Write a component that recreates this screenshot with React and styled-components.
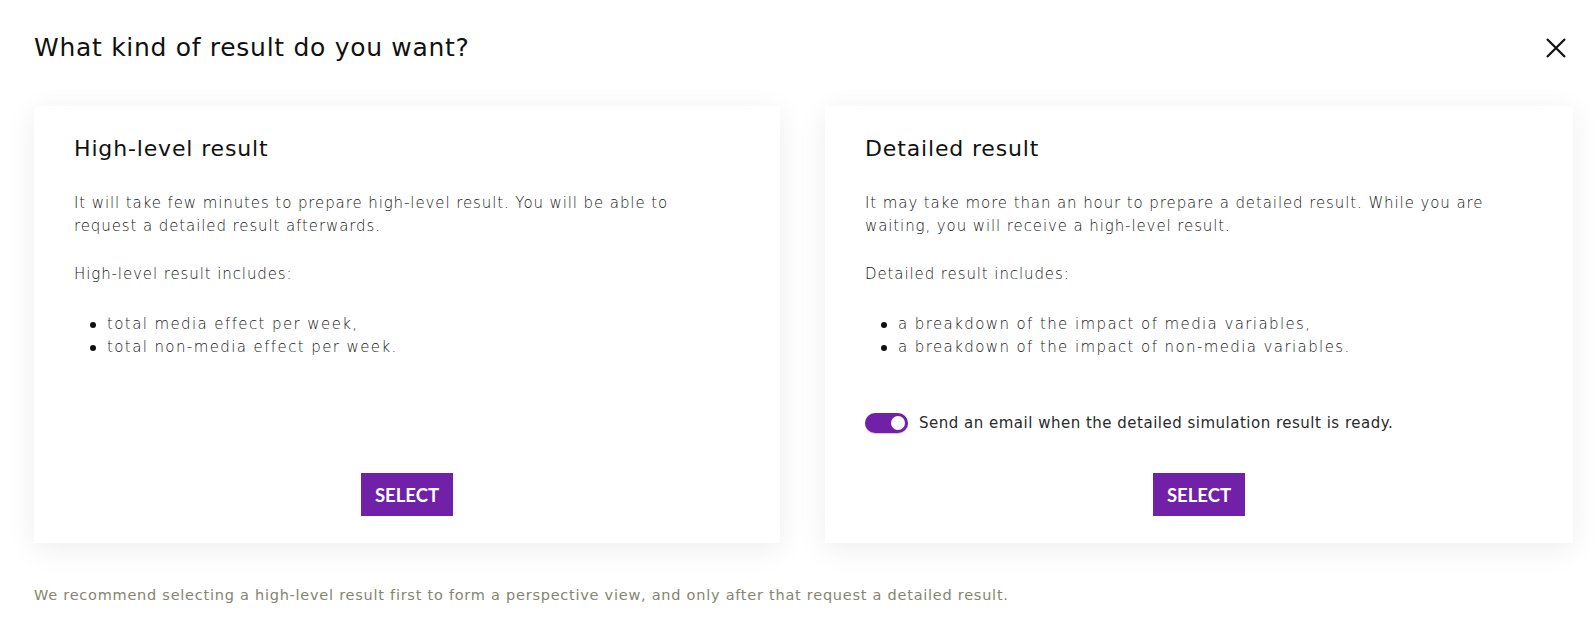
import React, { useState } from "react";
import styled, { createGlobalStyle } from "styled-components";

const GlobalStyle = createGlobalStyle`
  html, body {
    margin: 0;
    padding: 0;
    background: #fff;
    font-family: "DejaVu Sans", "Liberation Sans", sans-serif;
  }
`;

const purple = "#7021a7";

const Page = styled.div`
  width: 1595px;
  padding: 33px 29px 0 34px;
  box-sizing: border-box;
`;

const Header = styled.div`
  display: flex;
  justify-content: space-between;
  align-items: center;
  margin-bottom: 43px;
`;

const Title = styled.h1`
  margin: 0;
  font-size: 25px;
  line-height: 30px;
  font-weight: 400;
  color: #111;
  letter-spacing: 0.7px;
`;

const CloseButton = styled.button`
  display: flex;
  border: 0;
  background: none;
  padding: 0;
  cursor: pointer;
`;

const Cards = styled.div`
  display: grid;
  grid-template-columns: 746px 748px;
  gap: 45px;
`;

const Card = styled.div`
  background: #fff;
  box-shadow: 0 6px 28px rgba(0, 0, 0, 0.07);
  height: 437px;
  box-sizing: border-box;
  padding: 29px 40px 27px 40px;
  display: flex;
  flex-direction: column;
`;

const CardTitle = styled.h2`
  margin: 0 0 29px;
  font-size: 22px;
  line-height: 28px;
  font-weight: 400;
  color: #111;
  letter-spacing: 0.85px;
`;

const Text = styled.p`
  margin: 0 0 ${(p) => p.$gap || 25}px;
  font-size: 15px;
  line-height: 23px;
  font-weight: 300;
  color: #151515;
  letter-spacing: 0.9px;
  white-space: nowrap;
`;

const List = styled.ul`
  margin: 0;
  padding: 0;
  list-style: none;
  font-size: 15px;
  line-height: 23px;
  font-weight: 300;
  color: #151515;
  letter-spacing: 1.4px;
`;

const Item = styled.li`
  display: flex;
  align-items: center;
  padding-left: 16px;

  &::before {
    content: "";
    width: 6px;
    height: 6px;
    border-radius: 50%;
    background: #111;
    margin-right: 11px;
    margin-top: 1px;
  }
`;

const Bottom = styled.div`
  margin-top: auto;
  display: flex;
  flex-direction: column;
`;

const ToggleRow = styled.label`
  display: flex;
  align-items: center;
  gap: 11px;
  margin-bottom: 40px;
  font-size: 15px;
  line-height: 20px;
  font-weight: 400;
  color: #2a2a2a;
  letter-spacing: 0.5px;
  cursor: pointer;
`;

const Track = styled.span`
  position: relative;
  width: 43px;
  height: 20px;
  border-radius: 10px;
  background: ${(p) => (p.$on ? purple : "#bbb")};
  box-shadow: 0 1px 0 #d9c3ea;
  flex-shrink: 0;
`;

const Knob = styled.span`
  position: absolute;
  top: 3px;
  left: ${(p) => (p.$on ? "26px" : "3px")};
  width: 14px;
  height: 14px;
  border-radius: 50%;
  background: #fff;
`;

const SelectButton = styled.button`
  align-self: center;
  width: 92px;
  height: 43px;
  border: 0;
  background: ${purple};
  color: #fff;
  font-family: Lato, "Liberation Sans", sans-serif;
  font-weight: 700;
  font-size: 18.5px;
  cursor: pointer;
`;

const Footer = styled.p`
  margin: 42px 0 0;
  font-size: 14.5px;
  line-height: 20px;
  font-weight: 400;
  color: #85856f;
  letter-spacing: 0.75px;
`;

const CloseIcon = () => (
  <svg width="20" height="20" viewBox="0 0 20 20">
    <path d="M1 1 L19 19 M19 1 L1 19" stroke="#111" strokeWidth="2.2" />
  </svg>
);

export default function App() {
  const [notify, setNotify] = useState(true);

  return (
    <>
      <GlobalStyle />
      <Page>
        <Header>
          <Title>What kind of result do you want?</Title>
          <CloseButton aria-label="Close">
            <CloseIcon />
          </CloseButton>
        </Header>

        <Cards>
          <Card>
            <CardTitle>High-level result</CardTitle>
            <Text>
              It will take few minutes to prepare high-level result. You will be able to
              <br />
              request a detailed result afterwards.
            </Text>
            <Text $gap={27}>High-level result includes:</Text>
            <List>
              <Item>total media effect per week,</Item>
              <Item>total non-media effect per week.</Item>
            </List>
            <Bottom>
              <SelectButton>SELECT</SelectButton>
            </Bottom>
          </Card>

          <Card>
            <CardTitle>Detailed result</CardTitle>
            <Text>
              It may take more than an hour to prepare a detailed result. While you are
              <br />
              waiting, you will receive a high-level result.
            </Text>
            <Text $gap={27}>Detailed result includes:</Text>
            <List>
              <Item>a breakdown of the impact of media variables,</Item>
              <Item>a breakdown of the impact of non-media variables.</Item>
            </List>
            <Bottom>
              <ToggleRow onClick={() => setNotify(!notify)}>
                <Track $on={notify}>
                  <Knob $on={notify} />
                </Track>
                Send an email when the detailed simulation result is ready.
              </ToggleRow>
              <SelectButton>SELECT</SelectButton>
            </Bottom>
          </Card>
        </Cards>

        <Footer>
          We recommend selecting a high-level result first to form a perspective view, and only after that request a detailed result.
        </Footer>
      </Page>
    </>
  );
}
